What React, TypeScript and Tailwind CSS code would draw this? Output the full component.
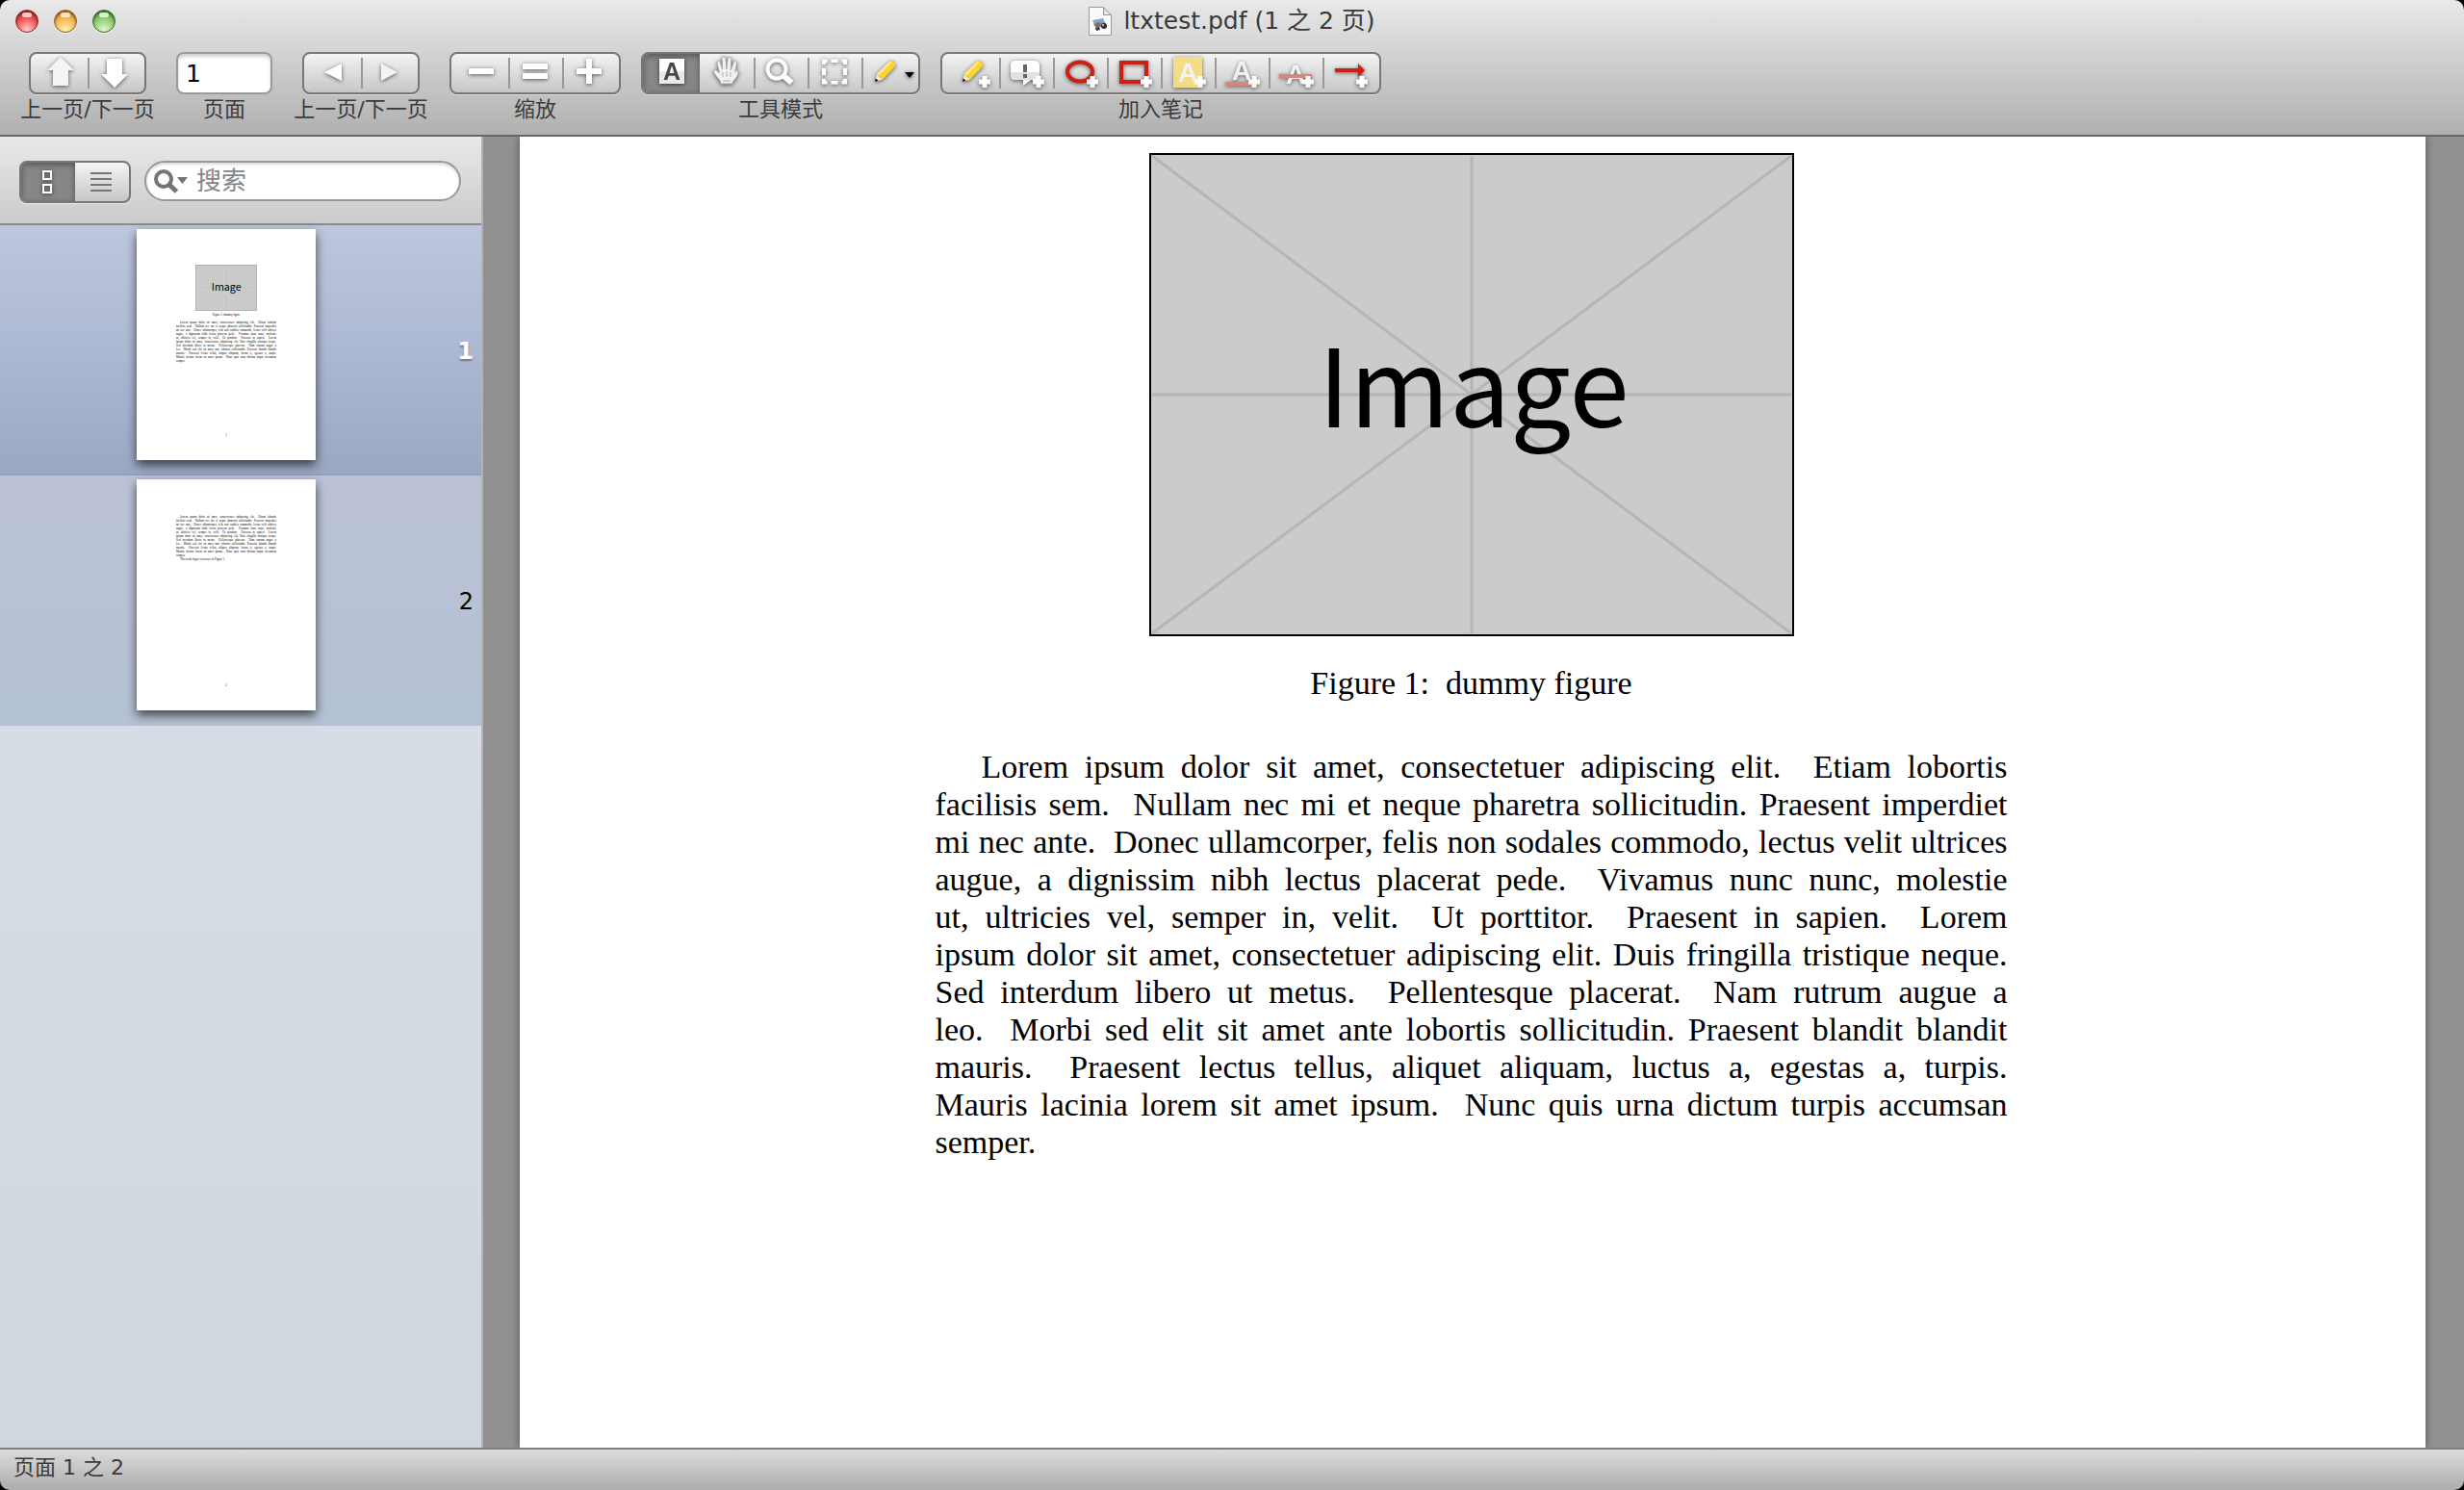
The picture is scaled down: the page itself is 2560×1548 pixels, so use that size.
import React, { useState } from "react";
import clsx from "clsx";

// Lines as typeset, sentence ends carry a wider space
const LOREM = [
  "Lorem ipsum dolor sit amet, consectetuer adipiscing elit.\u00a0 Etiam lobortis",
  "facilisis sem.\u00a0 Nullam nec mi et neque pharetra sollicitudin. Praesent imperdiet",
  "mi nec ante.\u00a0 Donec ullamcorper, felis non sodales commodo, lectus velit ultrices",
  "augue, a dignissim nibh lectus placerat pede.\u00a0 Vivamus nunc nunc, molestie",
  "ut, ultricies vel, semper in, velit.\u00a0 Ut porttitor.\u00a0 Praesent in sapien.\u00a0 Lorem",
  "ipsum dolor sit amet, consectetuer adipiscing elit. Duis fringilla tristique neque.",
  "Sed interdum libero ut metus.\u00a0 Pellentesque placerat.\u00a0 Nam rutrum augue a",
  "leo.\u00a0 Morbi sed elit sit amet ante lobortis sollicitudin. Praesent blandit blandit",
  "mauris.\u00a0 Praesent lectus tellus, aliquet aliquam, luctus a, egestas a, turpis.",
  "Mauris lacinia lorem sit amet ipsum.\u00a0 Nunc quis urna dictum turpis accumsan",
  "semper.",
];

/* ── ICONS ── every toolbar glyph is drawn on a 56x40 cell */

function Glyph({ children, className }: { children: React.ReactNode; className?: string }) {
  return (
    <svg
      viewBox="0 0 56 40"
      aria-hidden="true"
      className={clsx("w-14 h-10 shrink-0 drop-shadow-[0_1px_2px_rgba(0,0,0,0.6)]", className)}
    >
      {children}
    </svg>
  );
}

const Plus = () => <path d="M38.5 23h5v3.5H47v5h-3.5V35h-5v-3.5H35v-5h3.5z" fill="#fff" />;

const Pencil = ({ x = 0 }: { x?: number }) => (
  <g transform={`translate(${x} 0)`}>
    <path d="M14 29l2-8 6 5.500z" fill="#fbe9c9" />
    <path d="M14 29l.8-3.600 2.700 2.400z" fill="#000" />
    <path d="M16 20.500L29.500 7.500q1.500-1 3 0l2.500 2.500q1 1.500 0 3L22 26.500z" fill="#fdd32f" />
    <path d="M16 20.500L29.500 7.500l1.800 1.800L18 22.500z" fill="#ffe98a" />
  </g>
);

const GlyphA = ({ x, y, size, fill }: { x: number; y: number; size: number; fill: string }) => (
  <text
    x={x}
    y={y}
    textAnchor="middle"
    fontFamily="Liberation Sans, sans-serif"
    fontWeight="700"
    fontSize={size}
    fill={fill}
  >
    A
  </text>
);

const icons = {
  up: (
    <Glyph>
      <path d="M28 3l14 14h-6v16H20V17h-6z" fill="#f4f4f4" />
    </Glyph>
  ),
  down: (
    <Glyph>
      <path d="M20 5h16v16h6L28 35 14 21h6z" fill="#fff" />
    </Glyph>
  ),
  back: (
    <Glyph>
      <path d="M18 19l18-9v18z" fill="#fff" />
    </Glyph>
  ),
  forward: (
    <Glyph>
      <path d="M38 19l-17-9v18z" fill="#f4f4f4" />
    </Glyph>
  ),
  zoomOut: (
    <Glyph>
      <path d="M15 15h26v6H15z" fill="#fff" />
    </Glyph>
  ),
  actual: (
    <Glyph>
      <path d="M15 10h26v6H15zM15 20h26v6H15z" fill="#fff" />
    </Glyph>
  ),
  zoomIn: (
    <Glyph>
      <path d="M25 5h6v10h10v6H31v10h-6V21H15v-6h10z" fill="#fff" />
    </Glyph>
  ),
  text: (
    <Glyph>
      <path d="M14 5h26v26H14z" fill="#fff" />
      <path d="M14 18h26v13H14z" fill="#e9e9e9" />
      <GlyphA x={27} y={27} size={25} fill="#484848" />
    </Glyph>
  ),
  hand: (
    <Glyph>
      <path
        d="M22 31c0-3-2-4-4-7-2-2.500-3.500-4-3.500-6 0-1.500 2-2 3.500-.5l2.500 2.500-2.500-10c-.5-2.500 2.500-3.500 3.500-1l2 7-.5-11c0-3 3.500-3 4 0l.8 11L29 5.500c.3-3 4-2.500 3.800.3L32.300 17l2.700-8c1-2.500 4-1.500 3.500 1l-1.800 9c.3-2 3.300-2.500 3.300 0 0 3-2 6-4.500 8.500-1 1-1.500 2-1.500 3.500z"
        fill="#f1f1f1"
        stroke="#a9a9a9"
        strokeWidth="1"
      />
      <path d="M24 19v5M28 18v6M32 19v5M24 28h8" stroke="#c4c4c4" strokeWidth="1.500" />
    </Glyph>
  ),
  magnify: (
    <Glyph>
      <circle cx="24" cy="16" r="9.500" fill="none" stroke="#fff" strokeWidth="4" />
      <path d="M31 22.500l8.500 7.500" stroke="#fff" strokeWidth="6" />
    </Glyph>
  ),
  select: (
    <Glyph>
      <path
        d="M15 11V5.500h5.500V9H19v2zM24.500 5.500h7V9h-7zM35.500 5.500H41V11h-4V9h-1.500zM37 15h4v7h-4zM41 26v5.500h-5.500V28H37v-2zM24.500 28h7v3.500h-7zM20.500 31.500H15V26h4v2h1.500zM15 15h4v7h-4z"
        fill="#fff"
      />
    </Glyph>
  ),
  note: (
    <Glyph>
      <Pencil />
      <path d="M45 19h10l-5 6z" fill="#000" />
    </Glyph>
  ),
  addFree: (
    <Glyph>
      <Pencil x={4} />
      <Plus />
    </Glyph>
  ),
  addComment: (
    <Glyph>
      <path d="M17 7h20q5 0 5 5v10q0 5-5 5h-4l-8 6v-6h-8q-5 0-5-5V12q0-5 5-5z" fill="#fff" />
      <path d="M12 19h30v3q0 5-5 5H17q-5 0-5-5z" fill="#e2e2e2" />
      <path d="M25 11h4v8h-4zM25 21h4v4h-4z" fill="#666" />
      <Plus />
    </Glyph>
  ),
  addCircle: (
    <Glyph>
      <ellipse cx="28" cy="18.500" rx="13" ry="10" fill="none" stroke="#cd1f14" strokeWidth="4" />
      <Plus />
    </Glyph>
  ),
  addBox: (
    <Glyph>
      <path d="M15 9h26v20H15z" fill="none" stroke="#cd1f14" strokeWidth="4" />
      <Plus />
    </Glyph>
  ),
  addHighlight: (
    <Glyph className="opacity-90">
      <path d="M13 3h30v32H13z" fill="#f5dc7f" />
      <GlyphA x={28} y={29} size={28} fill="#f4f4f4" />
      <Plus />
    </Glyph>
  ),
  addUnderline: (
    <Glyph className="opacity-90">
      <path d="M11 29h34v4H11z" fill="#dc7c6e" />
      <GlyphA x={28} y={27} size={28} fill="#f4f4f4" />
      <Plus />
    </Glyph>
  ),
  addStrike: (
    <Glyph className="opacity-90">
      <GlyphA x={28} y={31} size={28} fill="#f4f4f4" />
      <path d="M11 21h34v4H11z" fill="#dc7c6e" />
      <Plus />
    </Glyph>
  ),
  addLine: (
    <Glyph>
      <path d="M13 15h24v-5l7 7-7 7v-5H13z" fill="#cd1f14" />
      <Plus />
    </Glyph>
  ),
  thumbs: (
    <Glyph>
      <path d="M23 9h8v8h-8zM23 23h8v8h-8z" fill="none" stroke="#fff" strokeWidth="2" />
    </Glyph>
  ),
  outline: (
    <svg viewBox="0 0 56 40" aria-hidden="true" className="w-14 h-10 shrink-0">
      <path d="M16 10h22v2H16zM16 16h22v2H16zM16 22h22v2H16zM16 28h22v2H16z" fill="#777" />
    </svg>
  ),
};

type IconName = keyof typeof icons;

function Segments({
  items,
  active,
  onPick,
  compact,
}: {
  items: [IconName, string][];
  active?: number;
  onPick?: (i: number) => void;
  compact?: boolean;
}) {
  return (
    <div className="flex h-11 shrink-0 overflow-hidden rounded-lg border-2 border-[#777] bg-linear-to-b from-[#f4f4f4] to-[#c6c6c6] shadow-[0_1px_0_rgba(255,255,255,0.5)]">
      {items.map(([icon, title], i) => {
        const first = i === 0;
        const last = i === items.length - 1;
        const divided = !first && active !== i && active !== i - 1;
        return (
          <button
            key={icon}
            type="button"
            aria-label={title}
            onClick={() => onPick?.(i)}
            className={clsx(
              "flex h-10 items-center overflow-hidden",
              (first || last) && !compact ? "w-[59px]" : "w-14",
              first ? "justify-end" : last ? "justify-start" : "justify-center",
              divided &&
                "bg-[linear-gradient(#999,#999)] bg-no-repeat bg-[length:2px_32px] bg-[position:left_center]",
              active === i && "bg-[#878787] shadow-[inset_0_2px_6px_rgba(0,0,0,0.4)]"
            )}
          >
            {icons[icon]}
          </button>
        );
      })}
    </div>
  );
}

function ToolItem({ label, wide, children }: { label: string; wide?: boolean; children: React.ReactNode }) {
  return (
    <div className={clsx("flex flex-col items-center gap-[2px]", wide && "w-[142px]")}>
      {children}
      <span className="whitespace-nowrap text-[22px] leading-7">{label}</span>
    </div>
  );
}

/* ── DOCUMENT ── */

function Figure({ className, thin }: { className: string; thin?: boolean }) {
  return (
    <svg viewBox="0 0 670 502" className={className} role="img" aria-label="Image">
      <rect
        x="1"
        y="1"
        width="668"
        height="500"
        fill="#cbcbcb"
        stroke={thin ? "#888" : "#000"}
        strokeWidth={thin ? 6 : 2}
      />
      <path d="M3 3l664 496M667 3L3 499M335 3v496M3 251h664" stroke="#b5b5b5" strokeWidth="3" />
      <text
        x="337"
        y="285"
        textAnchor="middle"
        fontSize="112"
        fontFamily="Noto Sans CJK SC, Open Sans, sans-serif"
      >
        Image
      </text>
    </svg>
  );
}

function Paragraph({ indent }: { indent: string }) {
  return (
    <p>
      {LOREM.map((line, i) => (
        <span
          key={i}
          className={clsx(
            "block whitespace-nowrap",
            i === 0 && indent,
            i < LOREM.length - 1 && "[text-align-last:justify]"
          )}
        >
          {line}
        </span>
      ))}
    </p>
  );
}

function Thumb({ page, selected, onSelect }: { page: number; selected: boolean; onSelect: () => void }) {
  return (
    <button
      type="button"
      onClick={onSelect}
      className={clsx(
        "flex h-[260px] w-full items-start justify-between border-b-2 pt-1 pr-2 pl-[142px]",
        selected
          ? "bg-linear-to-b from-[#bdc7dc] via-[#adb8d3] to-[#9aa8c4] border-[#93a0bc]"
          : "bg-linear-to-b from-[#bbc2d6] to-[#b5c1d4] border-[#b5c1d4]"
      )}
    >
      <span className="flex h-60 w-[186px] flex-col items-center bg-white pt-[37px] pb-6 font-['Liberation_Serif',serif] text-[3px] leading-[4px] text-black shadow-[0_5px_10px_rgba(0,0,0,0.65)]">
        {page === 1 && (
          <>
            <Figure thin className="h-12 w-16 shrink-0" />
            <span className="mt-[2px]">Figure 1: dummy figure</span>
          </>
        )}
        <span className={clsx("w-[104px] text-left", page === 1 && "mt-1")}>
          <Paragraph indent="pl-1" />
          {page === 2 && <span className="block pl-1">This is the hyper reference of Figure 1.</span>}
        </span>
        <span className="mt-auto">{page}</span>
      </span>
      <span
        className={clsx(
          "self-center text-[24px] leading-8",
          selected ? "font-bold text-white [text-shadow:0_2px_2px_rgba(0,0,0,0.35)]" : "text-black"
        )}
      >
        {page}
      </span>
    </button>
  );
}

/* ── WINDOW ── */

function TrafficLight({ name, className }: { name: string; className: string }) {
  return (
    <button
      type="button"
      aria-label={name}
      className={clsx(
        "relative size-6 rounded-full border shadow-[inset_0_2px_3px_rgba(0,0,0,0.45),0_1px_0_rgba(255,255,255,0.6)]",
        className
      )}
    >
      <span className="absolute left-[6px] top-[2px] h-[5px] w-[10px] rounded-full bg-white/75" />
    </button>
  );
}

export default function App() {
  const [page, setPage] = useState(1);
  const [tool, setTool] = useState(0);
  const [pane, setPane] = useState(0);

  return (
    <div className="h-screen bg-black">
      <div className="flex h-full flex-col overflow-hidden rounded-[10px] font-['DejaVu_Sans','Noto_Sans_CJK_SC',sans-serif] text-[#3a3a3a]">
        <header className="border-b-2 border-[#666] bg-linear-to-b from-[#e9e9e9] to-[#b0b0b0]">
          {/* Title bar */}
          <div className="grid h-11 grid-cols-[1fr_auto_1fr] items-center px-4">
            <div className="flex gap-4">
              <TrafficLight
                name="关闭"
                className="border-[#8e2a28] bg-[radial-gradient(circle_at_50%_90%,#ffc9c9,#f0474a_60%,#c8282c)]"
              />
              <TrafficLight
                name="最小化"
                className="border-[#92601c] bg-[radial-gradient(circle_at_50%_90%,#fff3ae,#f2ae47_60%,#c97a1e)]"
              />
              <TrafficLight
                name="缩放"
                className="border-[#3c6d27] bg-[radial-gradient(circle_at_50%_90%,#e2f7cc,#84c464_60%,#4c8f35)]"
              />
            </div>
            <h1 className="flex items-center gap-3 text-[25px] leading-8">
              <svg viewBox="0 0 24 30" aria-hidden="true" className="h-[30px] w-6">
                <path d="M.5.500h15l8 8v21H.5z" fill="#fafafa" stroke="#999" />
                <path d="M15.500.500v8h8z" fill="#e4e4e4" stroke="#999" />
                <path d="M4 14l11-2 3 7-10 4z" fill="#7fa6dc" />
                <path d="M5 18l5-2 4 1 3-1 1 3-10 3z" fill="#8a7a6a" />
                <path d="M9 16l2 1-1 4-2-1z" fill="#b4512c" />
                <path d="M7 22l4-1 1 3-4 1z" fill="#3a3a40" />
                <circle cx="16" cy="20" r="3" fill="#2e2e34" />
                <circle cx="15" cy="19" r="1" fill="#ddd" />
              </svg>
              ltxtest.pdf (1 之 2 页)
            </h1>
          </div>

          {/* Toolbar */}
          <div className="flex gap-[21px] px-5 pt-[10px] pb-3">
            <ToolItem label="上一页/下一页" wide>
              <Segments items={[["up", "上一页"], ["down", "下一页"]]} />
            </ToolItem>
            <div className="flex flex-col items-center gap-[2px]">
              <input
                id="page-number"
                defaultValue="1"
                className="h-11 w-[100px] rounded-lg border-2 border-[#9a9a9a] bg-white px-2 text-[25px] text-black shadow-[inset_0_3px_3px_rgba(0,0,0,0.18)] outline-none"
              />
              <label htmlFor="page-number" className="text-[22px] leading-7">
                页面
              </label>
            </div>
            <ToolItem label="上一页/下一页" wide>
              <Segments items={[["back", "后退"], ["forward", "前进"]]} />
            </ToolItem>
            <ToolItem label="缩放">
              <Segments items={[["zoomOut", "缩小"], ["actual", "实际大小"], ["zoomIn", "放大"]]} />
            </ToolItem>
            <ToolItem label="工具模式">
              <Segments
                active={tool}
                onPick={setTool}
                items={[
                  ["text", "文本工具"],
                  ["hand", "移动工具"],
                  ["magnify", "放大工具"],
                  ["select", "选择工具"],
                  ["note", "笔记工具"],
                ]}
              />
            </ToolItem>
            <ToolItem label="加入笔记">
              <Segments
                items={[
                  ["addFree", "文本笔记"],
                  ["addComment", "锚定笔记"],
                  ["addCircle", "圆形"],
                  ["addBox", "方框"],
                  ["addHighlight", "高亮"],
                  ["addUnderline", "下划线"],
                  ["addStrike", "删除线"],
                  ["addLine", "线条"],
                ]}
              />
            </ToolItem>
          </div>
        </header>

        <div className="flex min-h-0 flex-1">
          {/* Sidebar */}
          <aside className="flex w-[502px] shrink-0 flex-col border-r-2 border-[#b2b2b2] bg-linear-to-b from-[#dde2ea] to-[#d0d7df]">
            <div className="flex h-[92px] shrink-0 items-start gap-[14px] border-b-2 border-[#8b8b8b] bg-linear-to-b from-[#e9e9e9] to-[#cbcbcb] pt-[25px] pl-5 pr-[21px]">
              <Segments
                compact
                active={pane}
                onPick={setPane}
                items={[["thumbs", "缩略图"], ["outline", "目录"]]}
              />
              <label className="flex h-[42px] min-w-0 flex-1 items-center rounded-full border-2 border-[#999] bg-white pl-2 shadow-[inset_0_2px_3px_rgba(0,0,0,0.15)]">
                <svg viewBox="0 0 40 30" aria-hidden="true" className="h-[30px] w-10 shrink-0">
                  <circle cx="10" cy="13" r="8" fill="none" stroke="#757575" strokeWidth="4" />
                  <path d="M16 19l7.500 7" stroke="#757575" strokeWidth="5" />
                  <path d="M24 11h11l-5.500 7z" fill="#757575" />
                </svg>
                <input
                  type="text"
                  aria-label="搜索"
                  placeholder="搜索"
                  className="ml-1 min-w-0 flex-1 bg-transparent text-[26px] leading-8 text-black outline-none placeholder:text-[#858585]"
                />
              </label>
            </div>
            <Thumb page={1} selected={page === 1} onSelect={() => setPage(1)} />
            <Thumb page={2} selected={page === 2} onSelect={() => setPage(2)} />
          </aside>

          {/* Page view */}
          <main className="flex min-w-0 flex-1 overflow-hidden bg-[#919191] pl-[38px] pr-10">
            <article className="flex-1 bg-white pt-[17px] pr-[3px] font-['Liberation_Serif',serif] text-[34px] leading-[39px] text-black shadow-[0_0_8px_rgba(0,0,0,0.45)]">
              <div className="mx-auto w-full max-w-[1114px]">
                <figure className="flex flex-col items-center gap-[29px]">
                  <Figure className="h-[502px] w-[670px]" />
                  <figcaption>Figure 1:{"\u00a0"} dummy figure</figcaption>
                </figure>
                <div className="mt-12">
                  <Paragraph indent="pl-12" />
                </div>
              </div>
            </article>
          </main>
        </div>

        <footer className="flex h-11 shrink-0 items-center border-t-2 border-[#808080] bg-linear-to-b from-[#dcdcdc] to-[#adadad] px-[14px] pb-1 text-[22px] leading-7">
          页面 1 之 2
        </footer>
      </div>
    </div>
  );
}
